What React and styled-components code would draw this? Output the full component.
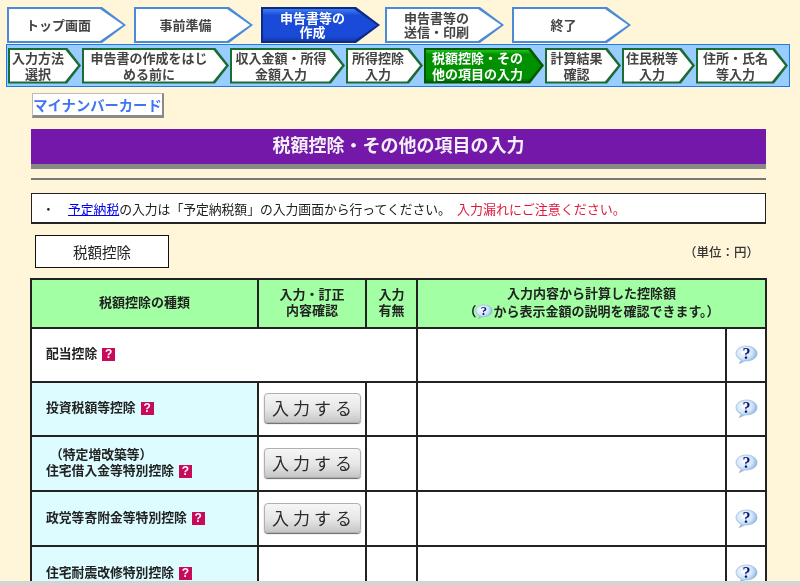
import React from 'react';
import styled, { createGlobalStyle, css } from 'styled-components';

const GlobalStyle = createGlobalStyle`
  html, body {
    margin: 0;
    padding: 0;
    background: #fff6da;
    font-family: "Noto Sans CJK JP", "Liberation Sans", sans-serif;
    overflow: hidden;
  }
`;

const Page = styled.div`
  height: 585px;
  box-sizing: border-box;
  overflow: hidden;
  background: #fff6da;
  border-bottom: 4px solid #d4d4d4;
  padding-top: 7px;
  filter: blur(0.3px);
`;

const TopNav = styled.nav`
  display: flex;
  margin-left: 7px;
  height: 36px;
`;

const arrow = (tip) => `polygon(0 0, calc(100% - ${tip}px) 0, 100% 50%, calc(100% - ${tip}px) 100%, 0 100%)`;

const TopStep = styled.div`
  position: relative;
  width: 119px;
  height: 36px;
  margin-right: ${(p) => p.$gap}px;
  flex: none;
  display: flex;
  align-items: center;
  justify-content: center;
  padding-right: 16px;
  box-sizing: border-box;
  clip-path: ${arrow(24)};
  background: ${(p) => (p.$active ? '#0d2a86' : '#4a8ad8')};
  color: ${(p) => (p.$active ? '#ffffff' : '#444444')};
  font-size: 13px;
  font-weight: 700;
  line-height: 14px;
  text-align: center;

  &::before {
    content: '';
    position: absolute;
    inset: 2px 3px 2px 2px;
    clip-path: ${arrow(23)};
    background: ${(p) => (p.$active ? 'linear-gradient(#3d7df0, #1a4bd8 20%, #1a4bd8 85%, #123aa8)' : '#ffffff')};
  }
`;

const StepText = styled.span`
  position: relative;
`;

const SubNav = styled.nav`
  display: flex;
  align-items: center;
  margin: 1px 10px 0 6px;
  height: 43px;
  box-sizing: border-box;
  padding: 0 0 0 1px;
  background: #99ccff;
  border: 1px solid #1a7af0;
`;

const SubStep = styled.div`
  position: relative;
  width: ${(p) => p.$w}px;
  height: 36px;
  flex: none;
  margin-right: 1px;
  display: flex;
  align-items: center;
  justify-content: center;
  padding-right: 13px;
  box-sizing: border-box;
  clip-path: ${arrow(14)};
  background: ${(p) => (p.$active ? '#005a00' : '#1b6b35')};
  color: ${(p) => (p.$active ? '#ffffff' : '#444444')};
  font-size: 13px;
  font-weight: 700;
  line-height: 16px;
  text-align: center;
  white-space: nowrap;

  &::before {
    content: '';
    position: absolute;
    inset: 2px 3px 2px 2px;
    clip-path: ${arrow(13)};
    background: ${(p) => (p.$active ? 'linear-gradient(#22c422, #009000 14%, #009000 88%, #006600)' : '#ffffff')};
  }
`;

const Main = styled.main`
  width: 735px;
  margin-left: 31px;
`;

const CardButton = styled.div`
  width: 132px;
  height: 25px;
  box-sizing: border-box;
  margin: 6px 0 0 1px;
  background: #ffffff;
  border: 1px solid #bbbbbb;
  border-right: 2px solid #8a8a8a;
  border-bottom: 3px solid #8a8a8a;
  color: #3f74f4;
  font-size: 14.3px;
  font-weight: 700;
  line-height: 21px;
  text-align: center;
  white-space: nowrap;
`;

const TitleBar = styled.h1`
  margin: 11px 0 0;
  height: 40px;
  box-sizing: border-box;
  background: #7318a8;
  border-bottom: 5px solid #888888;
  color: #f4f0f8;
  font-size: 18px;
  font-weight: 700;
  line-height: 30px;
  text-align: center;
`;

const Rule = styled.hr`
  margin: 9px 0 0;
  height: 2px;
  border: 0;
  background: #777777;
`;

const Notice = styled.p`
  margin: 13px 0 0;
  height: 31px;
  box-sizing: border-box;
  background: #ffffff;
  border: 1px solid #222222;
  border-bottom-width: 2px;
  padding-left: 10px;
  display: flex;
  align-items: center;
  color: #222222;
  font-size: 12.8px;
  white-space: nowrap;
`;

const Bullet = styled.span`
  width: 26px;
`;

const NoticeLink = styled.a`
  color: #0000ee;
  text-decoration: underline;
`;

const Warning = styled.span`
  color: #e0183c;
  font-size: 13px;
  margin-left: 6px;
`;

const SectionRow = styled.div`
  display: flex;
  align-items: center;
  justify-content: space-between;
  margin-top: 11px;
  padding: 0 7px 0 4px;
`;

const SectionBox = styled.div`
  width: 134px;
  height: 33px;
  box-sizing: border-box;
  background: #ffffff;
  border: 1px solid #111111;
  color: #222222;
  font-size: 14.5px;
  line-height: 31px;
  text-align: center;
`;

const Unit = styled.span`
  color: #333333;
  font-size: 12.5px;
  font-weight: 500;
`;

const Table = styled.table`
  width: 735px;
  margin: 10px 0 0 -1px;
  table-layout: fixed;
  border-collapse: collapse;
  border: 2px solid #222222;
  background: #ffffff;
`;

const headCell = css`
  border: 2px solid #222222;
  padding: 0 0 4px;
  color: #222222;
  font-size: 13px;
  font-weight: 700;
  line-height: ${(p) => (p.$wide ? 18 : 16)}px;
  text-align: center;
  vertical-align: middle;
  white-space: nowrap;
`;

const Head = styled.th`
  ${headCell}
  height: 43px;
  background: #a3ffa3;
`;

const Row = styled.tr`
  height: ${(p) => p.$h}px;
`;

const Label = styled.td`
  border: 2px solid #222222;
  padding: 0 0 4px 14px;
  background: ${(p) => (p.$plain ? '#ffffff' : '#dcfcff')};
  color: #222222;
  font-size: 12.8px;
  font-weight: 700;
  line-height: 16px;
  vertical-align: middle;
  white-space: nowrap;
`;

const Cell = styled.td`
  border: 2px solid #222222;
  padding: 0;
  text-align: center;
  vertical-align: middle;
`;

const Indent = styled.span`
  display: block;
  padding-left: 4px;
`;

const RedHelp = styled.span`
  display: inline-block;
  width: 13px;
  height: 13px;
  margin-left: 5px;
  background: #c80a5a;
  color: #ffffff;
  font-family: "Liberation Sans", sans-serif;
  font-size: 12px;
  font-weight: 700;
  line-height: 13px;
  text-align: center;
  vertical-align: 0;
`;

const InputButton = styled.button`
  display: block;
  width: 97px;
  height: 30px;
  margin: -1px auto 1px;
  padding: 0 0 0 4px;
  box-sizing: border-box;
  background: linear-gradient(#f6f6f6, #e6e6e6 55%, #c6c6c6);
  border: 1px solid #b0b0b0;
  border-radius: 4px;
  box-shadow: 0 1px 1px #666666;
  color: #2c2c2c;
  font-family: inherit;
  font-size: 17px;
  letter-spacing: 4px;
  line-height: 24px;
  white-space: nowrap;
`;

const HelpSvg = styled.svg`
  display: ${(p) => (p.$inline ? 'inline-block' : 'block')};
  width: ${(p) => (p.$inline ? 18 : 23)}px;
  height: ${(p) => (p.$inline ? 16 : 20)}px;
  margin: ${(p) => (p.$inline ? '0 0 0 -1px' : '0 auto')};
  vertical-align: -4px;
`;

const BubbleHelp = ({ inline, id }) => (
  <HelpSvg $inline={inline} viewBox="0 0 23 20">
    <defs>
      <radialGradient id={id} cx="0.4" cy="0.35" r="0.7">
        <stop offset="0" stopColor="#ffffff" />
        <stop offset="0.55" stopColor="#cfe4fa" />
        <stop offset="1" stopColor="#6fa2d8" />
      </radialGradient>
    </defs>
    <path d="M11.5 1C5.6 1 1 4.1 1 8.5c0 3 2.2 5.4 5.4 6.5L4.2 18.6l6.2-2.8c.4 0 .7.1 1.1.1 5.9 0 10.5-3.2 10.5-7.4S17.4 1 11.5 1z" fill={`url(#${id})`} stroke="#8faccb" strokeWidth=".6" />
    <text x="11.5" y="14" textAnchor="middle" fill="#0a1a78" fontFamily="Liberation Serif, serif" fontSize="16" fontWeight="700">?</text>
  </HelpSvg>
);

const topSteps = [
  { lines: ['トップ画面'], gap: 8 },
  { lines: ['事前準備'], gap: 8 },
  { lines: ['申告書等の', '作成'], gap: 5, active: true },
  { lines: ['申告書等の', '送信・印刷'], gap: 8 },
  { lines: ['終了'], gap: 0 },
];

const subSteps = [
  { lines: ['入力方法', '選択'], w: 73 },
  { lines: ['申告書の作成をはじ', 'める前に'], w: 147 },
  { lines: ['収入金額・所得', '金額入力'], w: 115 },
  { lines: ['所得控除', '入力'], w: 77 },
  { lines: ['税額控除・その', '他の項目の入力'], w: 120, active: true },
  { lines: ['計算結果', '確認'], w: 76 },
  { lines: ['住民税等', '入力'], w: 73 },
  { lines: ['住所・氏名', '等入力'], w: 92 },
];

const Lines = ({ lines }) => (
  <StepText>
    {lines.map((l, i) => (
      <React.Fragment key={l}>
        {i > 0 && <br />}
        {l}
      </React.Fragment>
    ))}
  </StepText>
);

const App = () => {
  return (
    <Page>
      <GlobalStyle />
      <TopNav>
        {topSteps.map((s) => (
          <TopStep key={s.lines.join()} $gap={s.gap} $active={s.active}>
            <Lines lines={s.lines} />
          </TopStep>
        ))}
      </TopNav>
      <SubNav>
        {subSteps.map((s) => (
          <SubStep key={s.lines.join()} $w={s.w} $active={s.active}>
            <Lines lines={s.lines} />
          </SubStep>
        ))}
      </SubNav>
      <Main>
        <CardButton>マイナンバーカード</CardButton>
        <TitleBar>税額控除・その他の項目の入力</TitleBar>
        <Rule />
        <Notice>
          <Bullet>・</Bullet>
          <NoticeLink href="#">予定納税</NoticeLink>の入力は「予定納税額」の入力画面から行ってください。
          <Warning>入力漏れにご注意ください。</Warning>
        </Notice>
        <SectionRow>
          <SectionBox>税額控除</SectionBox>
          <Unit>（単位：円）</Unit>
        </SectionRow>
        <Table>
          <colgroup>
            <col width="227" />
            <col width="108" />
            <col width="51" />
            <col width="309" />
            <col width="40" />
          </colgroup>
          <thead>
            <tr>
              <Head>税額控除の種類</Head>
              <Head>入力・訂正<br />内容確認</Head>
              <Head>入力<br />有無</Head>
              <Head $wide colSpan={2}>
                入力内容から計算した控除額<br />
                （<BubbleHelp inline id="headHelp" />から表示金額の説明を確認できます。）
              </Head>
            </tr>
          </thead>
          <tbody>
            <Row $h={54}>
              <Label $plain colSpan={3}>配当控除<RedHelp>?</RedHelp></Label>
              <Cell />
              <Cell><BubbleHelp id="help1" /></Cell>
            </Row>
            <Row $h={54}>
              <Label>投資税額等控除<RedHelp>?</RedHelp></Label>
              <Cell><InputButton>入力する</InputButton></Cell>
              <Cell />
              <Cell />
              <Cell><BubbleHelp id="help2" /></Cell>
            </Row>
            <Row $h={55}>
              <Label>
                <Indent>（特定増改築等）</Indent>
                住宅借入金等特別控除<RedHelp>?</RedHelp>
              </Label>
              <Cell><InputButton>入力する</InputButton></Cell>
              <Cell />
              <Cell />
              <Cell><BubbleHelp id="help3" /></Cell>
            </Row>
            <Row $h={55}>
              <Label>政党等寄附金等特別控除<RedHelp>?</RedHelp></Label>
              <Cell><InputButton>入力する</InputButton></Cell>
              <Cell />
              <Cell />
              <Cell><BubbleHelp id="help4" /></Cell>
            </Row>
            <Row $h={55}>
              <Label>住宅耐震改修特別控除<RedHelp>?</RedHelp></Label>
              <Cell />
              <Cell />
              <Cell />
              <Cell><BubbleHelp id="help5" /></Cell>
            </Row>
          </tbody>
        </Table>
      </Main>
    </Page>
  );
};

export default App;
